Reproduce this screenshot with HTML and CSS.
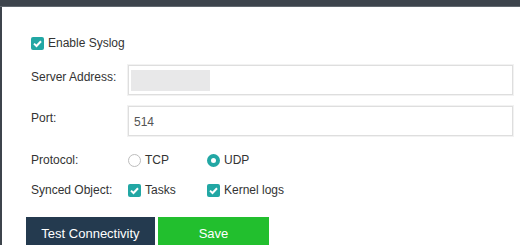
FILE: index.html
```html
<!DOCTYPE html>
<html lang="en">
<head>
    <meta charset="UTF-8">
    <meta name="viewport" content="width=device-width, initial-scale=1.0">
    <title>Syslog Settings</title>
    <link rel="stylesheet" href="styles.css">
</head>
<body>
    <div class="topbar"></div>
    <div class="panel">
        <div class="enable-row">
            <span class="checkbox checked">
                <svg viewBox="0 0 13 13" width="13" height="13"><path d="M3 6.6 L5.5 9 L10 4.2" fill="none" stroke="#fff" stroke-width="2"/></svg>
            </span>
            <span>Enable Syslog</span>
        </div>

        <div class="form-row field">
            <label class="label">Server Address:</label>
            <div class="input"><span class="redacted"></span></div>
        </div>

        <div class="form-row field port">
            <label class="label">Port:</label>
            <div class="input text">514</div>
        </div>

        <div class="form-row choice protocol">
            <label class="label">Protocol:</label>
            <div class="option"><span class="radio"></span>TCP</div>
            <div class="option"><span class="radio on"></span>UDP</div>
        </div>

        <div class="form-row choice synced">
            <label class="label">Synced Object:</label>
            <div class="option">
                <span class="checkbox checked">
                    <svg viewBox="0 0 13 13" width="13" height="13"><path d="M3 6.6 L5.5 9 L10 4.2" fill="none" stroke="#fff" stroke-width="2"/></svg>
                </span>Tasks
            </div>
            <div class="option">
                <span class="checkbox checked">
                    <svg viewBox="0 0 13 13" width="13" height="13"><path d="M3 6.6 L5.5 9 L10 4.2" fill="none" stroke="#fff" stroke-width="2"/></svg>
                </span>Kernel logs
            </div>
        </div>

        <div class="buttons">
            <button class="btn btn-test">Test Connectivity</button>
            <button class="btn btn-save">Save</button>
        </div>
    </div>
</body>
</html>
```

FILE: styles.css
```css
html, body {
    overflow: hidden;
}
body {
    margin: 0;
    font-family: "Liberation Sans", Arial, sans-serif;
    font-size: 12px;
    color: #333;
    background: #fff;
}
.topbar {
    height: 6px;
    background: #3d444c;
    border-bottom: 1px solid #626970;
}
.panel {
    border-left: 2px solid #3d444c;
    padding: 29px 7px 0 29px;
    height: 238px;
    box-sizing: border-box;
    overflow: hidden;
}
.enable-row {
    display: flex;
    align-items: center;
    gap: 4px;
    height: 14px;
}
.checkbox {
    display: inline-block;
    width: 13px;
    height: 13px;
    border-radius: 2px;
    flex: none;
}
.checkbox.checked {
    background: #22a7a4;
}
.checkbox svg {
    display: block;
}
.form-row {
    display: flex;
}
.label {
    width: 97px;
    flex: none;
}
.field {
    align-items: flex-start;
}
.field .label {
    padding-top: 5px;
}
.form-row.field {
    margin-top: 15px;
}
.form-row.port {
    margin-top: 11px;
}
.input {
    flex: 1;
    border: 1px solid #dedede;
    box-shadow: 0 0 0 1px #f2f2f2;
    padding: 4px 2px;
    box-sizing: border-box;
    height: 30px;
}
.input.text {
    padding: 8px 5px;
    color: #555;
}
.redacted {
    display: block;
    width: 79px;
    height: 21px;
    background: #e8e8e9;
}
.choice {
    align-items: center;
    height: 20px;
}
.protocol {
    margin-top: 14px;
}
.synced {
    margin-top: 10px;
}
.option {
    display: flex;
    align-items: center;
    gap: 4px;
    width: 79px;
}
.radio {
    display: inline-block;
    width: 13px;
    height: 13px;
    box-sizing: border-box;
    border: 1px solid #bdbdbd;
    border-radius: 50%;
    background: #fff;
    flex: none;
}
.radio.on {
    border: 4px solid #22a7a4;
}
.buttons {
    display: flex;
    gap: 3px;
    margin-top: 17px;
    margin-left: -5px;
}
.btn {
    font-family: "Liberation Sans", Arial, sans-serif;
    font-size: 13px;
    color: #fff;
    border: none;
    height: 32px;
    padding: 0 15px;
    cursor: pointer;
    flex: none;
}
.btn-test {
    background: #243a4f;
    width: 129px;
}
.btn-save {
    background: #22bf2e;
    width: 111px;
}
```
